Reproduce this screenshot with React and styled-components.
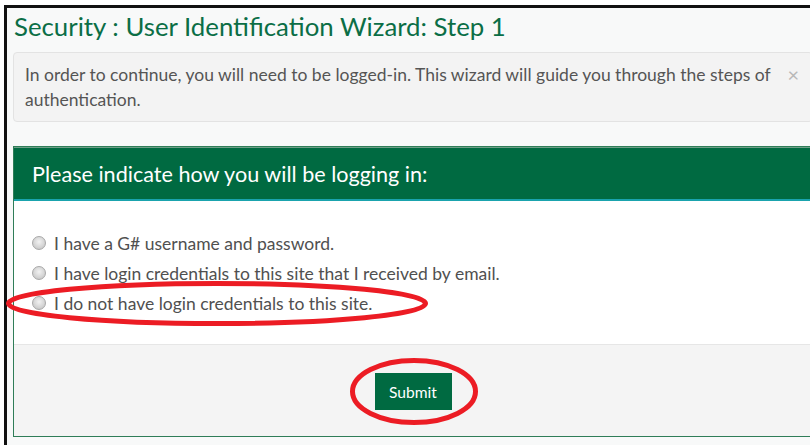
import React from "react";
import styled, { createGlobalStyle } from "styled-components";

const GlobalStyle = createGlobalStyle`
  html, body {
    margin: 0;
    padding: 0;
    background: #ffffff;
    overflow: hidden;
  }
  body {
    font-family: "Lato", "Open Sans", "Liberation Sans", sans-serif;
  }
`;

const GREEN = "#006a41";

const Frame = styled.div`
  margin: 5px 0 0 4px;
  border-left: 3px solid #111;
  border-top: 3px solid #111;
  background: #f8f9f9;
  min-height: 440px;
  padding-left: 6px;
  box-sizing: border-box;
`;

const Column = styled.div`
  width: 800px;
`;

const Title = styled.h1`
  margin: 0;
  padding: 3px 0 0 1px;
  height: 40px;
  box-sizing: border-box;
  font-size: 25.8px;
  line-height: 30px;
  font-weight: 400;
  color: #0b6e46;
`;

const Alert = styled.div`
  position: relative;
  margin-top: 4px;
  background: #f3f3f3;
  border: 1px solid #e3e3e3;
  border-radius: 4px;
  padding: 9px 40px 9px 11px;
  font-size: 17.5px;
  line-height: 25px;
  color: #555;
`;

const Close = styled.span`
  position: absolute;
  right: 13px;
  top: 9px;
  font-size: 20px;
  line-height: 25px;
  color: #b8b8b8;
`;

const Panel = styled.section`
  margin-top: 24px;
  border: 1px solid #2f7d58;
  background: #fff;
`;

const PanelHeader = styled.div`
  height: 54px;
  background: ${GREEN};
  border-top: 1px solid #6f9f88;
  border-bottom: 2px solid #1aa3ad;
  box-sizing: border-box;
  display: flex;
  align-items: center;
  padding-left: 18px;
  color: #fff;
  font-size: 21.6px;
`;

const PanelBody = styled.div`
  padding: 27px 0 26px 18px;
  display: flex;
  flex-direction: column;
`;

const Option = styled.label`
  position: relative;
  display: flex;
  align-items: center;
  height: 30px;
  gap: 8px;
  font-size: 17.5px;
  color: #505050;
`;

const Radio = styled.span`
  width: 14px;
  height: 14px;
  border-radius: 50%;
  border: 1px solid #a8a8a8;
  box-sizing: border-box;
  background: radial-gradient(circle at 50% 40%, #f2f2f2 0%, #d6d6d6 55%, #bdbdbd 100%);
  flex: none;
`;

const Ring = styled.svg`
  position: absolute;
  pointer-events: none;
  overflow: visible;
`;

const PanelFooter = styled.div`
  border-top: 1px solid #e6e6e6;
  background: #f4f4f4;
  height: 92px;
  box-sizing: border-box;
  display: flex;
  justify-content: center;
  padding-top: 28px;
`;

const ButtonWrap = styled.div`
  position: relative;
  height: 37px;
`;

const SubmitButton = styled.button`
  height: 37px;
  width: 77px;
  border: none;
  background: ${GREEN};
  color: #fff;
  font-family: inherit;
  font-size: 15.6px;
  padding: 0;
`;

// Red hand-drawn style ring placed over an element to call it out
function Highlight({ w, h, style }) {
  return (
    <Ring width={w} height={h} style={style}>
      <ellipse cx={w / 2} cy={h / 2} rx={w / 2 - 2.5} ry={h / 2 - 2.5} fill="none" stroke="#ec1c24" strokeWidth="5" />
    </Ring>
  );
}

const options = [
  "I have a G# username and password.",
  "I have login credentials to this site that I received by email.",
  "I do not have login credentials to this site.",
];

export default function App() {
  return (
    <>
      <GlobalStyle />
      <Frame>
        <Column>
          <Title>Security : User Identification Wizard: Step 1</Title>
          <Alert>
            In order to continue, you will need to be logged-in. This wizard will guide you through the steps of authentication.
            <Close>×</Close>
          </Alert>
          <Panel>
            <PanelHeader>Please indicate how you will be logging in:</PanelHeader>
            <PanelBody>
              {options.map((text, i) => (
                <Option key={i}>
                  <Radio />
                  {text}
                  {i === 2 && <Highlight w={422} h={45} style={{ left: -26, top: -7 }} />}
                </Option>
              ))}
            </PanelBody>
            <PanelFooter>
              <ButtonWrap>
                <SubmitButton>Submit</SubmitButton>
                <Highlight w={128} h={67} style={{ left: -25, top: -15 }} />
              </ButtonWrap>
            </PanelFooter>
          </Panel>
        </Column>
      </Frame>
    </>
  );
}
